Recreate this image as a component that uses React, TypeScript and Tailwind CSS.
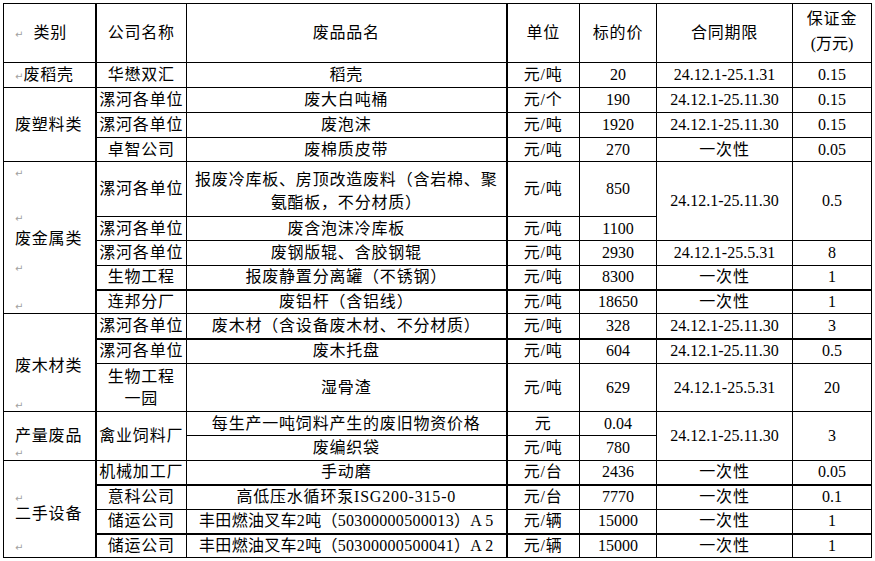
import type { ReactNode } from "react";

function Td({
  children,
  className = "",
  rowSpan,
}: {
  children?: ReactNode;
  className?: string;
  rowSpan?: number;
}) {
  return (
    <td
      rowSpan={rowSpan}
      className={`border border-black p-0 text-center align-middle leading-[22px] ${className}`}
    >
      {children}
    </td>
  );
}

// Word paragraph mark
function Mark({ className = "" }: { className?: string }) {
  return (
    <span className={`font-['DejaVu_Sans',sans-serif] text-[10px] leading-[10px] text-[#a0a0a0] tracking-normal ${className}`}>
      ↵
    </span>
  );
}

function MarkLine({ mt }: { mt: string }) {
  return (
    <div className={`h-[10px] leading-[10px] ${mt}`}>
      <Mark />
    </div>
  );
}

const num = "tracking-normal";
const cat = "border-r-2 text-left pl-[11px]";
const thick = "border-b-2";

export default function App() {
  return (
    <div className="bg-white w-[875px] h-[561px] pl-[3px] pt-[3px] font-['Liberation_Serif','Noto_Sans_CJK_SC',serif] text-[16px] text-black tracking-[0.8px]">
      <table className="table-fixed border-collapse w-[868px]">
        <colgroup>
          <col className="w-[92px]" />
          <col className="w-[91px]" />
          <col className="w-[320px]" />
          <col className="w-[73px]" />
          <col className="w-[77px]" />
          <col className="w-[136px]" />
          <col className="w-[79px]" />
        </colgroup>
        <tbody>
          <tr className="h-[59px]">
            <Td className={cat}>
              <Mark />
              <span className="ml-[10px]">类别</span>
            </Td>
            <Td>公司名称</Td>
            <Td className="border-r-2">废品品名</Td>
            <Td>单位</Td>
            <Td>标的价</Td>
            <Td>合同期限</Td>
            <Td className="leading-[25px] pb-[5px]">
              保证金
              <br />
              <span className="tracking-normal">(万元)</span>
            </Td>
          </tr>

          <tr className="h-[25px]">
            <Td className={cat}>
              <Mark />
              废稻壳
            </Td>
            <Td>华懋双汇</Td>
            <Td className="border-r-2">稻壳</Td>
            <Td>元/吨</Td>
            <Td className={num}>20</Td>
            <Td className={num}>24.12.1-25.1.31</Td>
            <Td className={num}>0.15</Td>
          </tr>

          <tr className="h-[25px]">
            <Td className={cat} rowSpan={3}>
              废塑料类
            </Td>
            <Td>漯河各单位</Td>
            <Td className="border-r-2">废大白吨桶</Td>
            <Td>元/个</Td>
            <Td className={num}>190</Td>
            <Td className={num}>24.12.1-25.11.30</Td>
            <Td className={num}>0.15</Td>
          </tr>
          <tr className="h-[25px]">
            <Td>漯河各单位</Td>
            <Td className="border-r-2">废泡沫</Td>
            <Td>元/吨</Td>
            <Td className={num}>1920</Td>
            <Td className={num}>24.12.1-25.11.30</Td>
            <Td className={num}>0.15</Td>
          </tr>
          <tr className="h-[24px]">
            <Td>卓智公司</Td>
            <Td className="border-r-2">废棉质皮带</Td>
            <Td>元/吨</Td>
            <Td className={num}>270</Td>
            <Td>一次性</Td>
            <Td className={num}>0.05</Td>
          </tr>

          <tr className="h-[55px]">
            <Td className={`${cat} align-top`} rowSpan={5}>
              <div className="h-[150px] overflow-hidden flex flex-col">
                <MarkLine mt="mt-[5px]" />
                <MarkLine mt="mt-[35px]" />
                <div className="h-[20px] leading-[20px] mt-[7px]">废金属类</div>
                <MarkLine mt="mt-[13px]" />
                <MarkLine mt="mt-[28px]" />
              </div>
            </Td>
            <Td>漯河各单位</Td>
            <Td className="border-r-2 leading-[23px] pt-[3px]">
              报废冷库板、房顶改造废料（含岩棉、聚
              <br />
              氨酯板，不分材质）
            </Td>
            <Td>元/吨</Td>
            <Td className={num}>850</Td>
            <Td className={num} rowSpan={2}>
              24.12.1-25.11.30
            </Td>
            <Td className={num} rowSpan={2}>
              0.5
            </Td>
          </tr>
          <tr className="h-[24px]">
            <Td>漯河各单位</Td>
            <Td className="border-r-2">废含泡沫冷库板</Td>
            <Td>元/吨</Td>
            <Td className={num}>1100</Td>
          </tr>
          <tr className="h-[25px]">
            <Td>漯河各单位</Td>
            <Td className="border-r-2">废钢版辊、含胶钢辊</Td>
            <Td>元/吨</Td>
            <Td className={num}>2930</Td>
            <Td className={num}>24.12.1-25.5.31</Td>
            <Td className={num}>8</Td>
          </tr>
          <tr className="h-[24px]">
            <Td className={thick}>生物工程</Td>
            <Td className={`${thick} border-r-2`}>报废静置分离罐（不锈钢）</Td>
            <Td className={thick}>元/吨</Td>
            <Td className={`${thick} ${num}`}>8300</Td>
            <Td className={thick}>一次性</Td>
            <Td className={`${thick} ${num}`}>1</Td>
          </tr>
          <tr className="h-[24px]">
            <Td>连邦分厂</Td>
            <Td className="border-r-2">废铝杆（含铝线）</Td>
            <Td>元/吨</Td>
            <Td className={num}>18650</Td>
            <Td>一次性</Td>
            <Td className={num}>1</Td>
          </tr>

          <tr className="h-[25px]">
            <Td className={`${cat} align-top`} rowSpan={3}>
              <div className="h-[96px] overflow-hidden flex flex-col">
                <div className="h-[20px] leading-[20px] mt-[42px]">废木材类</div>
                <MarkLine mt="mt-[23px]" />
              </div>
            </Td>
            <Td className={thick}>漯河各单位</Td>
            <Td className={`${thick} border-r-2`}>废木材（含设备废木材、不分材质）</Td>
            <Td className={thick}>元/吨</Td>
            <Td className={`${thick} ${num}`}>328</Td>
            <Td className={`${thick} ${num}`}>24.12.1-25.11.30</Td>
            <Td className={`${thick} ${num}`}>3</Td>
          </tr>
          <tr className="h-[25px]">
            <Td>漯河各单位</Td>
            <Td className="border-r-2">废木托盘</Td>
            <Td>元/吨</Td>
            <Td className={num}>604</Td>
            <Td className={num}>24.12.1-25.11.30</Td>
            <Td className={num}>0.5</Td>
          </tr>
          <tr className="h-[48px]">
            <Td>
              生物工程
              <br />
              一园
            </Td>
            <Td className="border-r-2">湿骨渣</Td>
            <Td>元/吨</Td>
            <Td className={num}>629</Td>
            <Td className={num}>24.12.1-25.5.31</Td>
            <Td className={num}>20</Td>
          </tr>

          <tr className="h-[24px]">
            <Td className={`${cat} align-top`} rowSpan={2}>
              <div className="h-[47px] overflow-hidden flex flex-col">
                <div className="h-[20px] leading-[20px] mt-[14px]">产量废品</div>
                <MarkLine mt="mt-[1px]" />
              </div>
            </Td>
            <Td rowSpan={2}>禽业饲料厂</Td>
            <Td className="border-r-2">每生产一吨饲料产生的废旧物资价格</Td>
            <Td>元</Td>
            <Td className={num}>0.04</Td>
            <Td className={num} rowSpan={2}>
              24.12.1-25.11.30
            </Td>
            <Td className={num} rowSpan={2}>
              3
            </Td>
          </tr>
          <tr className="h-[25px]">
            <Td className="border-r-2">废编织袋</Td>
            <Td>元/吨</Td>
            <Td className={num}>780</Td>
          </tr>

          <tr className="h-[24px]">
            <Td className={`${cat} align-top`} rowSpan={4}>
              <div className="h-[95px] overflow-hidden flex flex-col">
                <MarkLine mt="mt-[31px]" />
                <div className="h-[16px] leading-[16px] mt-[4px]">二手设备</div>
                <MarkLine mt="mt-[19px]" />
              </div>
            </Td>
            <Td className={thick}>机械加工厂</Td>
            <Td className={`${thick} border-r-2`}>手动磨</Td>
            <Td className={thick}>元/台</Td>
            <Td className={`${thick} ${num}`}>2436</Td>
            <Td className={thick}>一次性</Td>
            <Td className={`${thick} ${num}`}>0.05</Td>
          </tr>
          <tr className="h-[25px]">
            <Td>意科公司</Td>
            <Td className="border-r-2">高低压水循环泵ISG200-315-0</Td>
            <Td>元/台</Td>
            <Td className={num}>7770</Td>
            <Td>一次性</Td>
            <Td className={num}>0.1</Td>
          </tr>
          <tr className="h-[24px]">
            <Td className={thick}>储运公司</Td>
            <Td className={`${thick} border-r-2 tracking-[0.3px]`}>
              丰田燃油叉车2吨（50300000500013）A<span className="ml-[3px]">5</span>
            </Td>
            <Td className={thick}>元/辆</Td>
            <Td className={`${thick} ${num}`}>15000</Td>
            <Td className={thick}>一次性</Td>
            <Td className={`${thick} ${num}`}>1</Td>
          </tr>
          <tr className="h-[24px]">
            <Td>储运公司</Td>
            <Td className="border-r-2 tracking-[0.3px]">
              丰田燃油叉车2吨（50300000500041）A<span className="ml-[3px]">2</span>
            </Td>
            <Td>元/辆</Td>
            <Td className={num}>15000</Td>
            <Td>一次性</Td>
            <Td className={num}>1</Td>
          </tr>
        </tbody>
      </table>
    </div>
  );
}
